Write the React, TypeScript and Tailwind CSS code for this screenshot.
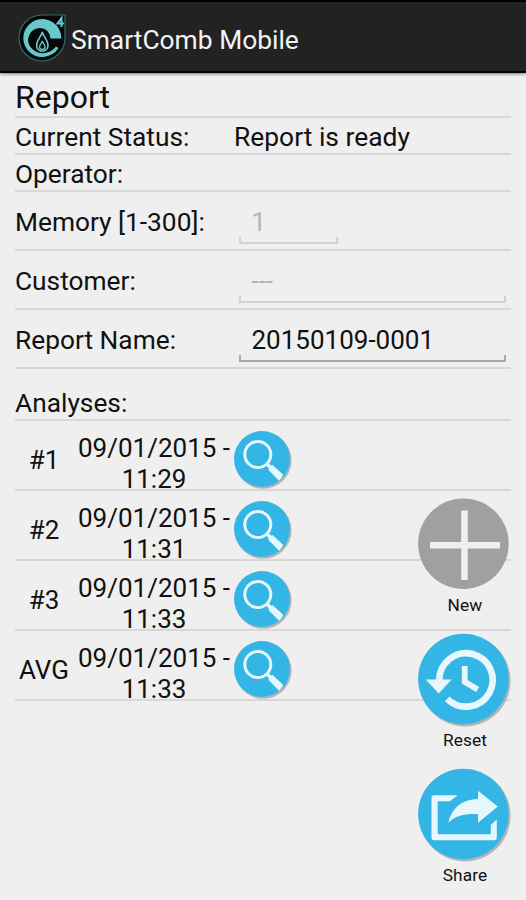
import React from 'react';

interface RowProps {
    className: string;
    label: string;
    children?: React.ReactNode;
}

interface ActionProps {
    label: string;
    children: React.ReactNode;
}

const analyses = [
    { id: '#1', date: '09/01/2015 -', time: '11:29' },
    { id: '#2', date: '09/01/2015 -', time: '11:31' },
    { id: '#3', date: '09/01/2015 -', time: '11:33' },
    { id: 'AVG', date: '09/01/2015 -', time: '11:33' },
];

const Logo: React.FC = () => (
    <svg width="48" height="48" viewBox="0 0 48 48" className="mt-[3px] shrink-0">
        <path d="M47 1V24A23 23 0 1 1 24 1Z" fill="#050808" stroke="#2f6d6b" strokeWidth="1.2" />
        <path d="M43.3 24.5A19 19 0 1 0 40.5 34L38 32.5A15.8 15.8 0 0 1 12.5 33A12 12 0 0 1 22 14Q31 14 32.5 24.5Z" fill="#67c9ca" />
        <path d="M24.3 18C25.5 23 30 26 30 31.5A5.7 5.7 0 0 1 18.6 31.5C18.6 26 23 23 24.3 18Z" fill="#050808" stroke="#67c9ca" strokeWidth="1.6" />
        <path d="M24.3 27C24.8 29.5 27 30.5 27 32.7A2.7 2.7 0 0 1 21.6 32.7C21.6 30.5 23.8 29.5 24.3 27Z" fill="none" stroke="#67c9ca" strokeWidth="1.3" />
        <path d="M43.5 13V4L39.5 9.5H46" fill="none" stroke="#67c9ca" strokeWidth="2" />
    </svg>
);

const SearchIcon: React.FC = () => (
    <svg width="60" height="60" viewBox="0 0 60 60" className="block">
        <circle cx="29.3" cy="29.5" r="28.3" fill="#b5b5b5" />
        <circle cx="28" cy="28" r="28" fill="#33b5e5" />
        <circle cx="23.8" cy="23.5" r="13" fill="none" stroke="#e6f7fd" strokeWidth="3" />
        <path d="M32.5 32.5L36.5 36.5" stroke="#e6f7fd" strokeWidth="3.6" />
        <path d="M38.5 34L49.2 43.8Q48 47.5 45 49.7L34.5 39Q35 35.3 38.5 34Z" fill="#e6f7fd" />
    </svg>
);

const PlusIcon: React.FC = () => (
    <svg width="94" height="94" viewBox="0 0 94 94" className="block">
        <circle cx="45.4" cy="45.7" r="45.3" fill="#a0a0a0" />
        <path d="M46.5 12.5V82M12 47.2H82" stroke="#efefef" strokeWidth="6.6" />
    </svg>
);

const ResetIcon: React.FC = () => (
    <svg width="94" height="94" viewBox="0 0 94 94" className="block">
        <circle cx="47" cy="47.8" r="45.6" fill="#b5b5b5" />
        <circle cx="45.4" cy="46" r="45.3" fill="#33b5e5" />
        <path d="M21.3 47.5A26.7 26.7 0 1 1 29.2 65.9" fill="none" stroke="#e6f7fd" strokeWidth="6.6" />
        <path d="M7.7 46.5H33.7L20.7 60.5Z" fill="#e6f7fd" />
        <path d="M46.7 33V48.8L59.7 56.5" fill="none" stroke="#e6f7fd" strokeWidth="5.8" />
    </svg>
);

const ShareIcon: React.FC = () => (
    <svg width="94" height="94" viewBox="0 0 94 94" className="block">
        <circle cx="47" cy="47.8" r="45.6" fill="#b5b5b5" />
        <circle cx="45.4" cy="46" r="45.3" fill="#33b5e5" />
        <path d="M39.7 27.2H16Q13.5 27.2 13.5 29.7V69.7Q13.5 72.2 16 72.2H76.3Q78.8 72.2 78.8 69.7V51.5L72.8 57V66.2H19.7V33.2H32Z" fill="#e6f7fd" />
        <path d="M30.2 54.7C34 39.5 44 31.5 60 31V22.7L79.8 38.4L60 54.7V46C48 45.5 38 47 30.2 54.7Z" fill="#e6f7fd" />
    </svg>
);

const Row: React.FC<RowProps> = ({ className, label, children }) => (
    <div className={`flex items-center border-b-2 border-[#d8d8d8] ${className}`}>
        <div className="w-[219px] shrink-0 pt-[2px] text-[26.3px] whitespace-nowrap">{label}</div>
        {children}
    </div>
);

// Holo text field: only the bottom line with two short side ticks
const Underline: React.FC<{ className: string }> = ({ className }) => (
    <div className={`ml-[5px] h-[7px] border-x-2 border-b-2 ${className}`} />
);

const Action: React.FC<ActionProps> = ({ label, children }) => (
    <button className="flex h-[135px] w-[94px] flex-col items-center">
        {children}
        <span className="mt-[3px] text-[17.3px] leading-5 tracking-[0.1px]">{label}</span>
    </button>
);

export default function App() {
    return (
        <div className="relative h-[900px] w-[526px] overflow-hidden bg-[#efefef] font-['Roboto','Liberation_Sans',sans-serif] text-[26px] leading-[30px] text-[#111]">
            <header className="flex h-[73px] items-center border-t-2 border-b-2 border-black bg-[#222] pb-[1px] pl-[18px] text-[#f3f3f3] shadow-[0_1px_3px_rgba(0,0,0,0.5)]">
                <Logo />
                <h1 className="mt-[7px] ml-[5px] text-[26.4px] whitespace-nowrap">SmartComb Mobile</h1>
            </header>

            <main className="px-[15px]">
                <div className="flex h-[45px] items-center border-b-2 border-[#d8d8d8] pt-[4px] text-[32px]">Report</div>
                <Row className="h-[37px]" label="Current Status:">
                    <span className="pt-[2px] text-[26.4px]">Report is ready</span>
                </Row>
                <Row className="h-[37px]" label="Operator:" />
                <Row className="h-[59px]" label="Memory [1-300]:">
                    <div className="flex flex-col pt-[10px] text-[#b4b4b4]">
                        <span className="pl-[17.5px]">1</span>
                        <Underline className="w-[99px] border-[#d2d2d2]" />
                    </div>
                </Row>
                <Row className="h-[59px]" label="Customer:">
                    <div className="flex flex-col pt-[10px] text-[#b4b4b4]">
                        <span className="pl-[17.5px]">---</span>
                        <Underline className="w-[267px] border-[#d2d2d2]" />
                    </div>
                </Row>
                <Row className="h-[59px]" label="Report Name:">
                    <div className="flex flex-col pt-[10px]">
                        <span className="pl-[17.5px]">20150109-0001</span>
                        <Underline className="w-[267px] border-[#aaa]" />
                    </div>
                </Row>
                <Row className="h-[52px] pt-[16px]" label="Analyses:" />

                {analyses.map((item) => (
                    <div key={item.id} className="flex h-[70px] items-center border-b-2 border-[#d8d8d8]">
                        <div className="w-[58px] pt-[10px] text-center">{item.id}</div>
                        <div className="w-[162px] pt-[17px] text-center leading-[31px] whitespace-nowrap">
                            <div>{item.date}</div>
                            <div>{item.time}</div>
                        </div>
                        <button className="mt-[12px] -ml-[1px]">
                            <SearchIcon />
                        </button>
                    </div>
                ))}
            </main>

            <div className="absolute top-[498px] left-[418px] flex flex-col">
                <Action label="New"><PlusIcon /></Action>
                <Action label="Reset"><ResetIcon /></Action>
                <Action label="Share"><ShareIcon /></Action>
            </div>
        </div>
    );
}
